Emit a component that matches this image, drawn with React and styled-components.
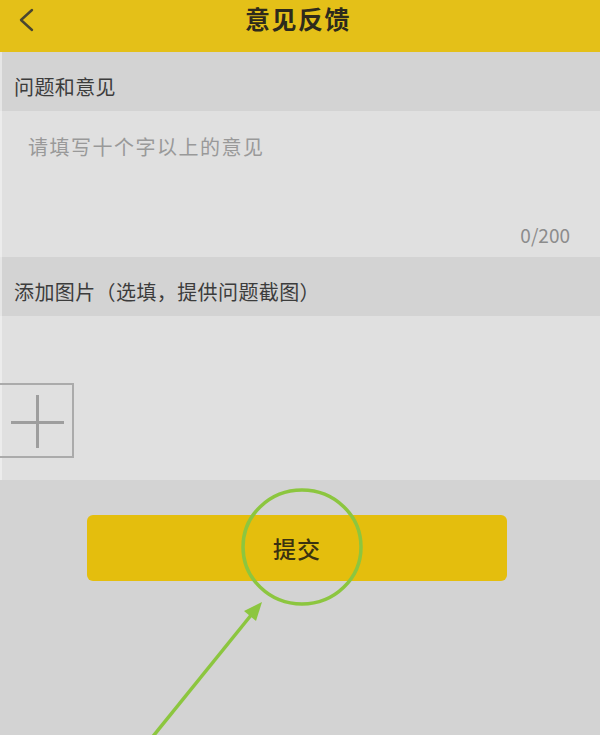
import styled, { createGlobalStyle } from 'styled-components'

const GlobalStyle = createGlobalStyle`
  html, body {
    margin: 0;
    padding: 0;
    background: #d3d3d3;
    font-family: "Noto Sans CJK SC", "Noto Sans", sans-serif;
  }
  * {
    box-sizing: border-box;
  }
`

const Page = styled.div`
  position: relative;
  width: 600px;
  height: 735px;
  overflow: hidden;
  display: flex;
  flex-direction: column;
  background: #d3d3d3;
`

const Header = styled.header`
  display: grid;
  grid-template-columns: 1fr auto 1fr;
  align-items: start;
  height: 52px;
  padding-top: 3px;
  background: #e4c018;
`

const BackButton = styled.button`
  justify-self: start;
  width: 40px;
  height: 30px;
  margin: 5px 0 0 15px;
  padding: 0;
  border: none;
  background: transparent;
  display: flex;
  align-items: flex-start;
`

const Title = styled.h1`
  margin: 0 0 0 -4px;
  font-size: 25px;
  line-height: 30px;
  font-weight: 700;
  letter-spacing: 1.5px;
  color: #2d2a1c;
`

const Band = styled.div`
  height: 59px;
  padding: 23px 0 0 12px;
  font-size: 20px;
  line-height: 24px;
  letter-spacing: 0.4px;
  color: #3c3c3c;
  background: #d3d3d3;
  border-left: 2px solid #e6e6e6;
`

const InputBlock = styled.div`
  height: 146px;
  display: flex;
  flex-direction: column;
  padding: 24px 30px 10px 26px;
  background: #e0e0e0;
  border-left: 2px solid #ececec;
`

const TextArea = styled.textarea`
  height: 88px;
  padding: 0;
  border: none;
  outline: none;
  resize: none;
  background: transparent;
  font-family: inherit;
  font-size: 20px;
  line-height: 24px;
  letter-spacing: 1.5px;
  color: #555;

  &::placeholder {
    color: #999999;
  }
`

const Counter = styled.div`
  align-self: flex-end;
  font-size: 19px;
  line-height: 23px;
  color: #8c8c8c;
`

const ImageBlock = styled.div`
  height: 164px;
  padding-top: 67px;
  background: #e0e0e0;
  border-left: 2px solid #ececec;
`

const AddBox = styled.button`
  position: relative;
  width: 79px;
  height: 75px;
  margin-left: -7px;
  padding: 0;
  border: 2px solid #ababab;
  background: transparent;

  &::before,
  &::after {
    content: '';
    position: absolute;
    background: #9e9e9e;
  }
  &::before {
    left: 14px;
    top: 36px;
    width: 53px;
    height: 2.5px;
  }
  &::after {
    left: 39px;
    top: 10px;
    width: 2.5px;
    height: 53px;
  }
`

const Footer = styled.div`
  flex: 1;
  padding: 35px 0 0 87px;
  background: #d3d3d3;
`

const SubmitButton = styled.button`
  width: 420px;
  height: 66px;
  border: none;
  border-radius: 6px;
  background: #e4be0d;
  font-family: inherit;
  font-size: 23px;
  font-weight: 500;
  color: #3a3210;
  letter-spacing: 1px;
`

const Annotation = styled.svg`
  position: absolute;
  left: 0;
  top: 0;
  pointer-events: none;
`

function App() {
  return (
    <Page>
      <GlobalStyle />
      <Header>
        <BackButton aria-label="返回">
          <svg width="20" height="24" viewBox="0 0 20 24">
            <polyline
              points="17,2 6,12 17,22"
              fill="none"
              stroke="#4a4630"
              strokeWidth="2.4"
              strokeLinecap="round"
              strokeLinejoin="round"
            />
          </svg>
        </BackButton>
        <Title>意见反馈</Title>
        <span />
      </Header>

      <Band>问题和意见</Band>
      <InputBlock>
        <TextArea placeholder="请填写十个字以上的意见" />
        <Counter>0/200</Counter>
      </InputBlock>

      <Band>添加图片（选填，提供问题截图）</Band>
      <ImageBlock>
        <AddBox aria-label="添加图片" />
      </ImageBlock>

      <Footer>
        <SubmitButton>提交</SubmitButton>
      </Footer>

      <Annotation width="600" height="735" viewBox="0 0 600 735">
        <ellipse cx="302" cy="547" rx="59" ry="57" fill="none" stroke="#8cc63f" strokeWidth="3.5" />
        <line x1="150" y1="740" x2="252" y2="614" stroke="#8cc63f" strokeWidth="3.5" />
        <polygon points="262,602 256,621 244,611" fill="#8cc63f" />
      </Annotation>
    </Page>
  )
}

export default App
